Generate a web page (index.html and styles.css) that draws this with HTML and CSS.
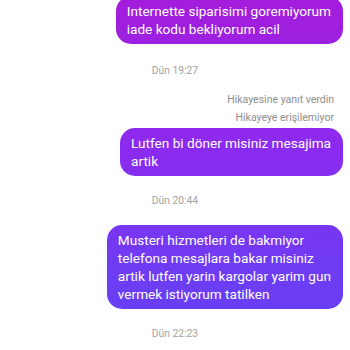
FILE: index.html
```html
<!DOCTYPE html>
<html lang="tr">
<head>
<meta charset="utf-8">
<link rel="stylesheet" href="styles.css">
</head>
<body>
<div class="chat">
  <div class="bubble b1">Internette siparisimi goremiyorum<br>iade kodu bekliyorum acil</div>
  <div class="time t1">Dün 19:27</div>
  <div class="story">
    <div>Hikayesine yanıt verdin</div>
    <div>Hikayeye erişilemiyor</div>
  </div>
  <div class="bubble b2">Lutfen bi döner misiniz mesajima<br>artik</div>
  <div class="time t2">Dün 20:44</div>
  <div class="bubble b3">Musteri hizmetleri de bakmiyor<br>telefona mesajlara bakar misiniz<br>artik lutfen yarin kargolar yarim gun<br>vermek istiyorum tatilken</div>
  <div class="time t3">Dün 22:23</div>
</div>
</body>
</html>
```
FILE: styles.css
```css
html, body {
  margin: 0;
  padding: 0;
  background: #ffffff;
}
body {
  font-family: Roboto, "Noto Sans", sans-serif;
  width: 350px;
  height: 350px;
  overflow: hidden;
}
.chat {
  display: flex;
  flex-direction: column;
  align-items: flex-end;
  padding: 0 7px;
  margin-top: -4px;
}
.bubble {
  width: fit-content;
  white-space: nowrap;
  color: #ffffff;
  font-size: 13.6px;
  line-height: 18px;
  padding: 6px 12px 6px 11px;
  border-radius: 15px;
  background: linear-gradient(to bottom, #a41cdb 0px, #8b2bef 150px, #6c3df4 280px, #6540f3 350px);
  background-attachment: fixed;
}
.time {
  align-self: stretch;
  text-align: center;
  font-size: 10.3px;
  line-height: 14px;
  color: #a3a3a3;
}
.t1 { margin-top: 20px; }
.t2 { margin-top: 18px; margin-bottom: 17px; }
.t3 { margin-top: 18px; }
.story {
  margin-top: 13px;
  margin-bottom: 1px;
  padding-right: 9px;
  text-align: right;
  font-size: 10.5px;
  line-height: 18px;
  color: #8e8e8e;
}
```
